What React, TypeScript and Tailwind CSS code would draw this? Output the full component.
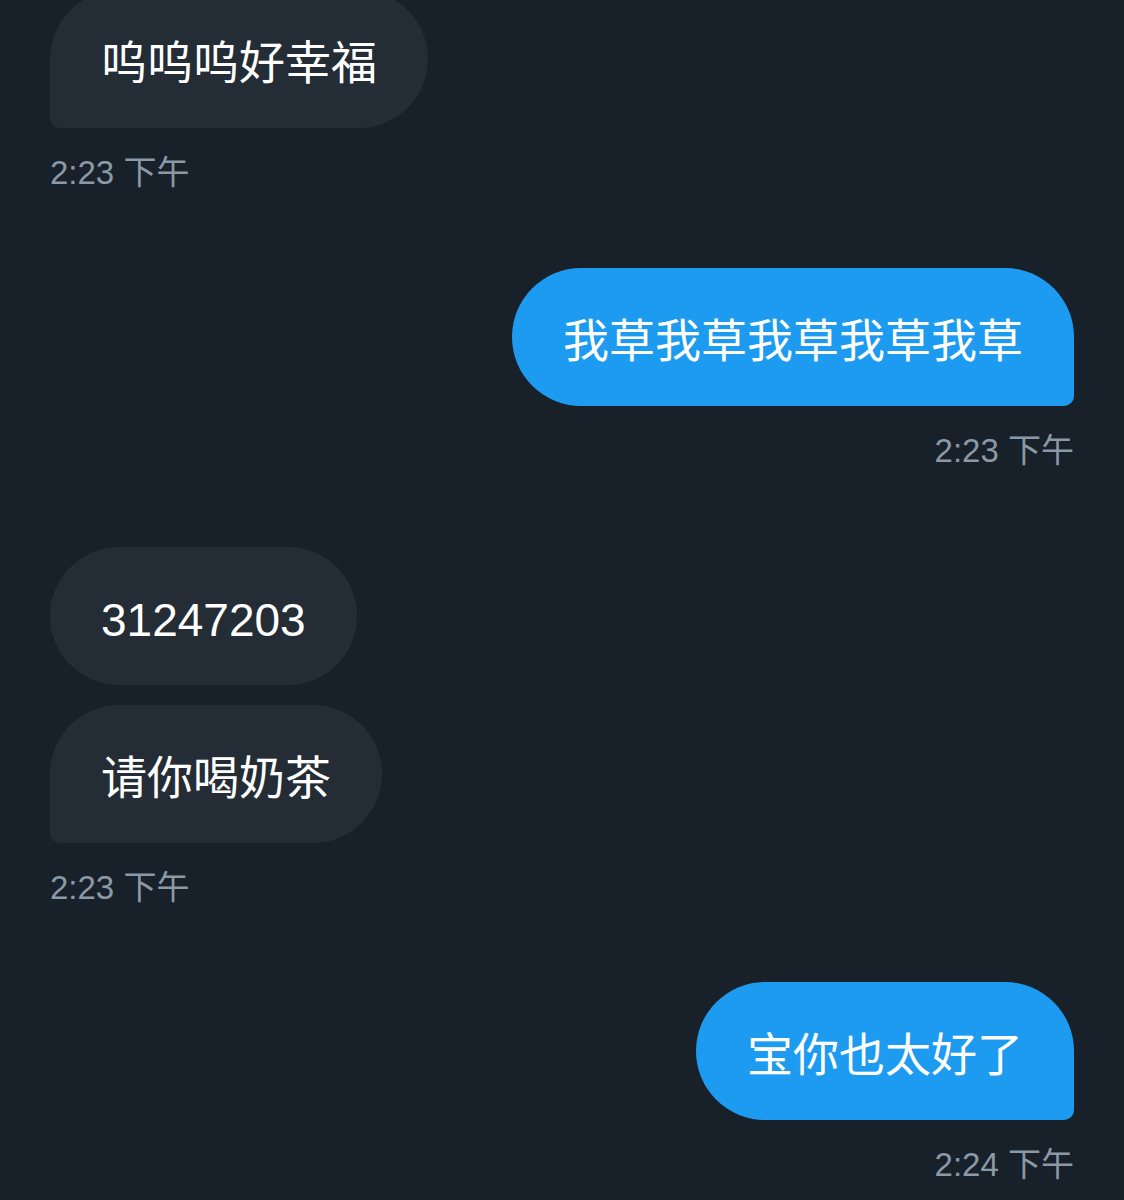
const font = { fontFamily: '"Liberation Sans", "Noto Sans CJK SC", sans-serif' };

type Msg = { text: string; shape: string };

function Bubble({ text, mine, shape }: { text: string; mine?: boolean; shape: string }) {
  return (
    <div
      className={`h-[138px] flex items-center px-[51px] pt-[8px] text-[46px] leading-none text-white ${shape} ${
        mine ? "bg-[#1d9bf0]" : "bg-[#242d36]"
      }`}
    >
      {text}
    </div>
  );
}

function Group({ msgs, mine, time, className }: { msgs: Msg[]; mine?: boolean; time: string; className?: string }) {
  return (
    <div className={`flex flex-col ${mine ? "items-end" : "items-start"} ${className ?? ""}`}>
      <div className={`flex flex-col gap-[20px] ${mine ? "items-end" : "items-start"}`}>
        {msgs.map((m, i) => (
          <Bubble key={i} text={m.text} mine={mine} shape={m.shape} />
        ))}
      </div>
      <div className="mt-[25px] text-[33px] leading-[40px] text-[#8b98a5]">{time}</div>
    </div>
  );
}

export default function App() {
  return (
    <div className="w-[1124px] h-[1200px] overflow-hidden bg-[#18202a] px-[50px]" style={font}>
      <Group
        className="-mt-[10px]"
        time="2:23 下午"
        msgs={[{ text: "呜呜呜好幸福", shape: "rounded-[69px] rounded-bl-[10px]" }]}
      />
      <Group
        mine
        className="mt-[75px]"
        time="2:23 下午"
        msgs={[{ text: "我草我草我草我草我草", shape: "rounded-[69px] rounded-br-[10px]" }]}
      />
      <Group
        className="mt-[76px]"
        time="2:23 下午"
        msgs={[
          { text: "31247203", shape: "rounded-[69px]" },
          { text: "请你喝奶茶", shape: "rounded-[69px] rounded-bl-[10px]" },
        ]}
      />
      <Group
        mine
        className="mt-[74px]"
        time="2:24 下午"
        msgs={[{ text: "宝你也太好了", shape: "rounded-[69px] rounded-br-[10px]" }]}
      />
    </div>
  );
}
